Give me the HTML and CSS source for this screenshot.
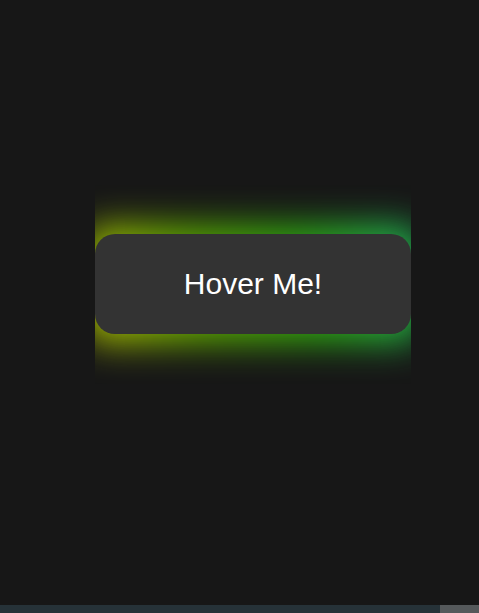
FILE: index.html
```html
<!DOCTYPE html>
<html>
<head>
<meta charset="utf-8">
<link rel="stylesheet" href="styles.css">
</head>
<body>
<div class="page">
  <main class="stage">
    <div class="glow-frame">
      <button class="btn">Hover Me!</button>
    </div>
  </main>
  <div class="hscroll"><div class="thumb"></div></div>
</div>
</body>
</html>
```
FILE: styles.css
```css
html, body {
  margin: 0;
  padding: 0;
  background: #171717;
}
.page {
  display: flex;
  flex-direction: column;
  height: 613px;
}
.stage {
  flex: 1;
  padding: 185px 0 0 95px;
}
.glow-frame {
  width: 316px;
  padding: 49px 0 50px;
  overflow: hidden;
  position: relative;
  isolation: isolate;
}
.btn {
  display: block;
  position: relative;
  width: 316px;
  height: 100px;
  border: none;
  border-radius: 20px;
  background: #333333;
  color: #ffffff;
  font-family: "Liberation Sans", Arial, sans-serif;
  font-size: 30px;
  padding: 0;
}
.btn::before {
  content: "";
  position: absolute;
  inset: -8px -10px;
  border-radius: 20px;
  background: linear-gradient(75deg, #c0c800 0%, #60b000 35%, #30b010 65%, #20c060 100%);
  filter: blur(18px);
  z-index: -1;
}
.hscroll {
  height: 8px;
  background: #263238;
  display: flex;
  justify-content: flex-end;
}
.thumb {
  width: 39px;
  background: #55595b;
}
```
